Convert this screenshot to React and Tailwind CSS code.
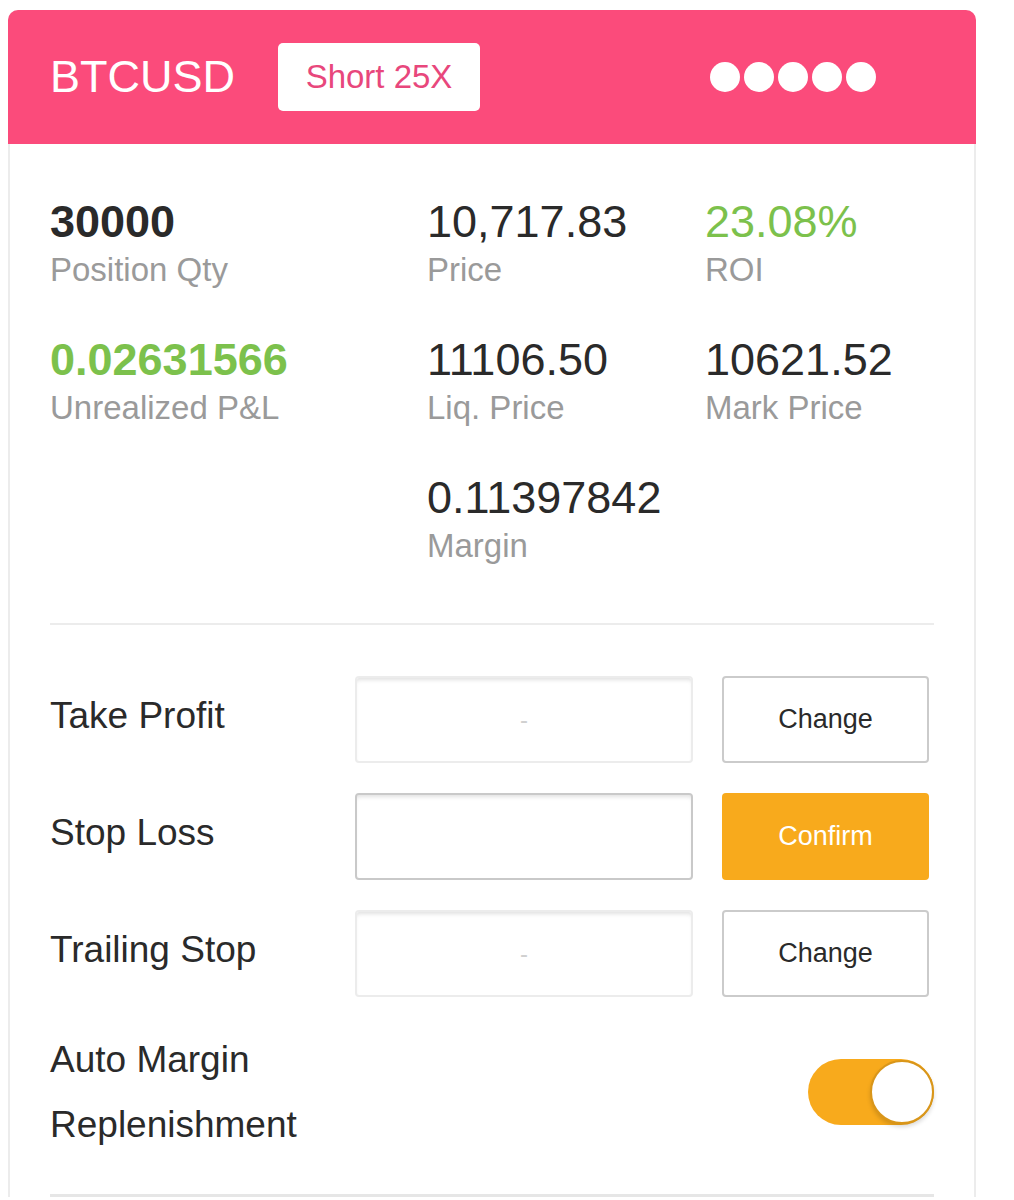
import React, { useState } from 'react';

const stats = [
  { value: '30000', label: 'Position Qty', tone: 'bold' },
  { value: '10,717.83', label: 'Price' },
  { value: '23.08%', label: 'ROI', tone: 'green' },
  { value: '0.02631566', label: 'Unrealized P&L', tone: 'greenBold' },
  { value: '11106.50', label: 'Liq. Price' },
  { value: '10621.52', label: 'Mark Price' },
  { value: null },
  { value: '0.11397842', label: 'Margin' },
  { value: null },
];

const toneClass = {
  bold: 'font-bold text-[#2a2a2a]',
  green: 'text-[#7cc14c]',
  greenBold: 'font-bold text-[#7cc14c]',
};

const Stat = ({ value, label, tone }) => {
  if (!value) return <div />;
  return (
    <div className="flex flex-col gap-[4px]">
      <span className={`text-[45px] leading-[50px] ${toneClass[tone] || 'text-[#2a2a2a]'}`}>{value}</span>
      <span className="text-[33px] leading-[38px] text-[#9a9a9a]">{label}</span>
    </div>
  );
};

const OrderRow = ({ label, value, active, onAction }) => (
  <div className="flex items-center h-[87px]">
    <span className="w-[305px] pb-[8px] text-[37px] text-[#2a2a2a]">{label}</span>
    <div
      className={`w-[338px] h-full rounded-[4px] border-2 bg-white flex items-center justify-center text-[24px] text-[#d0d0d0] shadow-[inset_0_4px_4px_-2px_rgba(0,0,0,0.12)] ${
        active ? 'border-[#c9c9c9]' : 'border-[#ececec]'
      }`}
    >
      {value}
    </div>
    <button
      onClick={onAction}
      className={`ml-[29px] w-[207px] h-full rounded-[4px] text-[27px] ${
        active ? 'bg-[#f8aa1c] text-white' : 'bg-white border-2 border-[#cbcbcb] text-[#2a2a2a]'
      }`}
    >
      {active ? 'Confirm' : 'Change'}
    </button>
  </div>
);

export default function App() {
  const [autoMargin, setAutoMargin] = useState(true);

  return (
    <div className="min-h-[1200px] bg-white pt-[10px] pl-[8px] [font-family:'Liberation_Sans',Arial,sans-serif]">
      <div className="w-[968px] rounded-t-[10px] border-x-2 border-[#ececec] bg-white">
        {/* header */}
        <div className="-mx-[2px] h-[134px] rounded-t-[10px] bg-[#fb4b7b] flex items-center pl-[42px] pr-[100px]">
          <span className="text-[45px] text-white">BTCUSD</span>
          <span className="ml-[43px] w-[202px] h-[68px] rounded-[5px] bg-white flex items-center justify-center text-[33px] text-[#e8477c]">
            Short 25X
          </span>
          <div className="ml-auto flex gap-[4px]">
            {[0, 1, 2, 3, 4].map((i) => (
              <span key={i} className="w-[30px] h-[30px] rounded-full bg-white" />
            ))}
          </div>
        </div>

        <div className="px-[40px]">
          {/* stats */}
          <div className="pt-[53px] grid grid-cols-[377px_278px_1fr] gap-y-[46px]">
            {stats.map((s, i) => (
              <Stat key={i} {...s} />
            ))}
          </div>

          <div className="mt-[58px] h-[2px] bg-[#ececec]" />

          {/* orders */}
          <div className="pt-[51px] flex flex-col gap-[30px]">
            <OrderRow label="Take Profit" value="-" />
            <OrderRow label="Stop Loss" value="" active />
            <OrderRow label="Trailing Stop" value="-" />
          </div>

          {/* auto margin */}
          <div className="mt-[30px] flex items-center justify-between">
            <span className="text-[37px] leading-[65px] text-[#2a2a2a]">
              Auto Margin
              <br />
              Replenishment
            </span>
            <button
              onClick={() => setAutoMargin(!autoMargin)}
              className={`w-[126px] h-[66px] rounded-full flex items-center ${
                autoMargin ? 'bg-[#f8aa1c] justify-end' : 'bg-[#e5e5e5] justify-start'
              }`}
            >
              <span className="w-[64px] h-[64px] rounded-full bg-white border-2 border-[#d9961a] shadow-[0_3px_4px_rgba(0,0,0,0.15)]" />
            </button>
          </div>

          <div className="mt-[37px] h-[3px] bg-[#e6e6e6]" />
        </div>
      </div>
    </div>
  );
}
